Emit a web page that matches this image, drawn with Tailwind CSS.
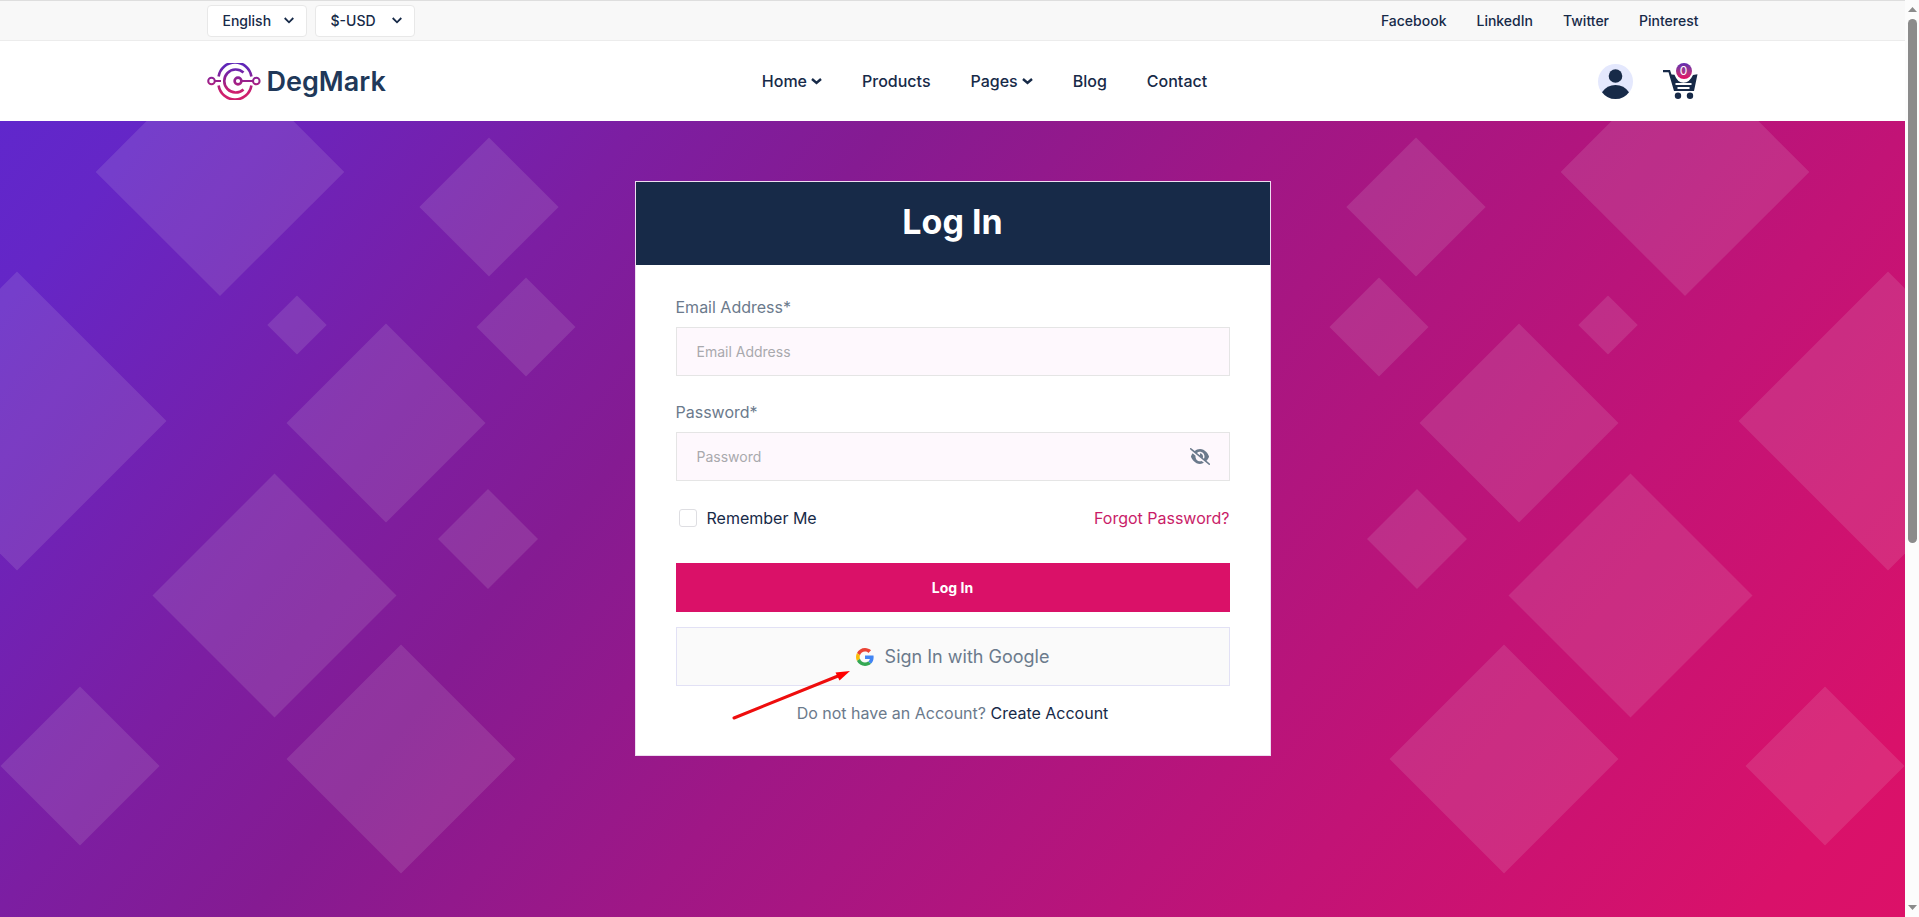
<!DOCTYPE html>
<html lang="en">
<head>
<meta charset="utf-8">
<title>DegMark - Log In</title>
<meta name="viewport" content="width=device-width, initial-scale=1">
<script src="https://cdn.jsdelivr.net/npm/@tailwindcss/browser@4"></script>
</head>
<body class="flex h-screen overflow-hidden bg-white font-['Inter',sans-serif] text-[#172a48]">
<div class="flex min-w-0 flex-1 flex-col">
  <div class="border-y border-t-[#dedede] border-b-[#ececec] bg-[#f8f8f8]">
    <div class="mx-auto flex h-[39px] max-w-[1492px] items-center justify-between text-sm font-medium">
      <div class="flex gap-2">
        <div class="relative">
          <select aria-label="Language" class="h-8 w-[100px] appearance-none rounded border border-[#e8e8e8] bg-white pl-[15px]"><option>English</option></select>
          <svg class="pointer-events-none absolute top-3 right-[13px]" width="10" height="7" viewBox="0 0 10 7" fill="none" stroke="#172a48" stroke-width="1.800"><path d="M.7 1 5 5.300 9.300 1"/></svg>
        </div>
        <div class="relative">
          <select aria-label="Currency" class="h-8 w-[100px] appearance-none rounded border border-[#e8e8e8] bg-white pl-[15px]"><option>$-USD</option></select>
          <svg class="pointer-events-none absolute top-3 right-[13px]" width="10" height="7" viewBox="0 0 10 7" fill="none" stroke="#172a48" stroke-width="1.800"><path d="M.7 1 5 5.300 9.300 1"/></svg>
        </div>
      </div>
      <div class="flex gap-[30px]">
        <a href="#">Facebook</a><a href="#">LinkedIn</a><a href="#">Twitter</a><a href="#">Pinterest</a>
      </div>
    </div>
  </div>

  <header>
    <div class="mx-auto grid h-20 max-w-[1492px] grid-cols-[1fr_auto_1fr] items-center">
      <a href="#" class="flex items-center gap-1.5">
        <svg width="54" height="37" viewBox="0 0 54 37" fill="none" stroke="url(#lg)" stroke-width="2.600">
          <defs><linearGradient id="lg" gradientUnits="userSpaceOnUse" x1="0" y1="0" x2="0" y2="37"><stop offset="0.100" stop-color="#5f27b8"/><stop offset="0.450" stop-color="#93208f"/><stop offset="0.800" stop-color="#cf1f6c"/></linearGradient></defs>
          <circle cx="4.500" cy="18" r="3.300" stroke-width="2"/><path d="M8 18.010h6" stroke-width="2"/>
          <path d="M11.600 13.500a16.600 16.600 0 0 1 32.800 0M11.600 22.500a16.600 16.600 0 0 0 32.800 0"/>
          <path d="M36.500 9.500a11.500 11.500 0 1 0 0 17"/>
          <circle cx="31" cy="18" r="3.400"/><path d="M34.500 18.010H46" stroke-width="2"/><circle cx="49.300" cy="18" r="3.300" stroke-width="2"/>
        </svg>
        <span class="pt-0.5 text-[27px] leading-9 font-semibold text-[#203859]">DegMark</span>
      </a>
      <nav class="flex gap-10 pl-16 font-medium">
        <a href="#" class="flex items-center gap-1">Home<svg width="11" height="7" viewBox="0 0 11 7" fill="none" stroke="currentColor" stroke-width="2.400"><path d="M1 1l4.500 4L10 1"/></svg></a>
        <a href="#">Products</a>
        <a href="#" class="flex items-center gap-1">Pages<svg width="11" height="7" viewBox="0 0 11 7" fill="none" stroke="currentColor" stroke-width="2.400"><path d="M1 1l4.500 4L10 1"/></svg></a>
        <a href="#">Blog</a>
        <a href="#">Contact</a>
      </nav>
      <div class="flex items-center justify-end gap-[30px] pr-px">
        <a href="#" aria-label="Account"><svg width="35" height="35" viewBox="0 0 35 35"><circle cx="17.500" cy="17.500" r="17.500" fill="#e4e8fd"/><circle cx="17.500" cy="12" r="6.800" fill="#172a48"/><path d="M4 28.200Q9 21 17.500 21T31 28.200Q26 35 17.500 35T4 28.200Z" fill="#172a48"/></svg></a>
        <a href="#" aria-label="Cart" class="relative">
          <svg width="35" height="36" viewBox="0 0 35 36" fill="#172a48"><path d="M0 7h7l1.500 4.500 3 .2q3 8 9 8T30 12l4.500-.8L31 28H11L5.500 9.200H0Z"/><circle cx="15" cy="32.800" r="3.200"/><circle cx="27" cy="32.800" r="3.200"/><path d="M12.500 21h16M14.500 25h12" stroke="#fff" stroke-width="1.800"/></svg>
          <span class="absolute top-0 left-[13px] flex size-4 items-center justify-center rounded-full bg-linear-to-b from-[#5f27b0] to-[#dc1168] to-90% text-xs text-white">0</span>
        </a>
      </div>
    </div>
  </header>

  <main class="relative flex flex-1 justify-center bg-[linear-gradient(129deg,#6027cc_0%,#6526c6_6%,#7c1ea2_25%,#851b92_35%,#9f1786_50%,#c21376_75%,#d9116a_94%,#dc1168_100%)]">
    <svg class="absolute inset-0 size-full" viewBox="0 0 1905 796" preserveAspectRatio="none" fill="#eee" fill-opacity=".12" aria-hidden="true">
      <defs><g id="diamonds">
        <path d="M220-73.500 344.300 51 220 175 95.700 51Z"/>
        <path d="M489 16.500 558.600 86 489 155.500 419.400 86Z"/>
        <path d="M526 156.500 575.500 206 526 255.500 476.500 206Z"/>
        <path d="M297 174.500 326.700 204 297 233.500 267.300 204Z"/>
        <path d="M386 202.500 485.500 302 386 401.500 286.500 302Z"/>
        <path d="M17 150.500 166.500 300 17 449.500-132.500 300Z"/>
        <path d="M274.500 352.500 396.500 474.500 274.500 596.500 152.500 474.500Z"/>
        <path d="M488 368 538 418 488 468 438 418Z"/>
        <path d="M401 523.500 515.500 638 401 752.500 286.500 638Z"/>
        <path d="M80 565.500 159.500 645 80 724.500.5 645Z"/>
      </g></defs>
      <use href="#diamonds"/><use href="#diamonds" transform="translate(1905 0) scale(-1 1)"/>
    </svg>

    <section class="relative mt-15 w-full max-w-[636px] self-start border border-[#eedcf0] bg-white">
      <h1 class="bg-[#172a48] pt-[18px] pb-[22px] text-center text-[34px] leading-[43px] font-bold text-white">Log In</h1>
      <form class="px-10 pt-[30px] pb-[30px]">
        <label for="email" class="block leading-6 text-[#6b7a8c]">Email Address*</label>
        <input id="email" type="email" placeholder="Email Address" class="mt-2 block h-[49px] w-full border border-[#e5e5e5] bg-[#fef8fd] px-5 text-sm placeholder:text-[#a9a9ad]">
        <label for="password" class="mt-6 block leading-6 text-[#6b7a8c]">Password*</label>
        <div class="relative mt-2">
          <input id="password" type="password" placeholder="Password" class="block h-[49px] w-full border border-[#e5e5e5] bg-[#fef8fd] px-5 text-sm placeholder:text-[#a9a9ad]">
          <button type="button" aria-label="Show password" class="absolute top-4 right-5"><svg width="20" height="17" viewBox="0 0 640 512" preserveAspectRatio="none" fill="#6b7a8c"><path d="M38.800 5.100C28.400-3.100 13.300-1.200 5.100 9.200S-1.200 34.700 9.200 42.900l592 464c10.400 8.200 25.500 6.300 33.700-4.100s6.300-25.500-4.100-33.700L525.600 386.700c39.600-40.600 66.400-86.100 79.900-118.400 3.300-7.900 3.300-16.700 0-24.600-14.900-35.700-46.200-87.700-93-131.100C465.500 68.800 400.800 32 320 32c-68.200 0-125 26.300-169.300 60.800L38.800 5.100zM223.100 149.500C248.600 126.200 282.700 112 320 112c79.500 0 144 64.500 144 144 0 24.900-6.300 48.300-17.400 68.700L408 294.500c8.400-19.300 10.600-41.400 4.800-63.300-11.100-41.500-47.800-69.400-88.600-71.100-5.800-.2-9.200 6.100-7.400 11.700 2.100 6.400 3.300 13.200 3.300 20.300 0 10.200-2.400 19.800-6.600 28.300l-90.300-70.800zM373 389.900c-16.400 6.500-34.300 10.100-53 10.100-79.500 0-144-64.500-144-144 0-6.900.5-13.600 1.400-20.200L83.100 161.500C60.300 191.200 44 220.800 34.500 243.700c-3.300 7.900-3.300 16.700 0 24.600 14.900 35.700 46.200 87.700 93 131.100C174.500 443.200 239.200 480 320 480c47.800 0 89.900-12.900 126.200-32.500L373 389.900z"/></svg></button>
        </div>
        <div class="mt-[25px] flex items-center justify-between leading-6">
          <label class="flex items-center gap-2.5 pl-[3px]"><input type="checkbox" class="size-[18px] appearance-none rounded-[3px] border border-[#dedee2] bg-white">Remember Me</label>
          <a href="#" class="text-[#c91c68]">Forgot Password?</a>
        </div>
        <button type="submit" class="mt-[33px] block h-[49px] w-full bg-[#da1168] text-sm font-bold text-white">Log In</button>
        <button type="button" class="mt-[15px] flex h-[59px] w-full items-center justify-center gap-[11px] border border-[#e2e1f5] bg-[#fafafa] text-lg text-[#6b7a8c]">
          <svg width="18" height="18" viewBox="0 0 48 48"><path fill="#EA4335" d="M24 9.500c3.540 0 6.710 1.220 9.210 3.600l6.850-6.850C35.900 2.380 30.470 0 24 0 14.620 0 6.510 5.380 2.560 13.220l7.980 6.190C12.430 13.720 17.740 9.500 24 9.500z"/><path fill="#4285F4" d="M46.980 24.550c0-1.570-.15-3.090-.38-4.550H24v9.020h12.940c-.58 2.960-2.260 5.480-4.780 7.180l7.730 6c4.510-4.180 7.090-10.360 7.090-17.650z"/><path fill="#FBBC05" d="M10.530 28.590c-.48-1.450-.76-2.990-.76-4.590s.27-3.140.76-4.590l-7.980-6.190C.92 16.460 0 20.120 0 24s.92 7.540 2.560 10.780l7.970-6.190z"/><path fill="#34A853" d="M24 48c6.480 0 11.930-2.130 15.890-5.810l-7.730-6c-2.150 1.450-4.920 2.300-8.160 2.300-6.260 0-11.570-4.220-13.470-9.910l-7.980 6.190C6.510 42.620 14.620 48 24 48z"/></svg>
          Sign In with Google
        </button>
        <p class="mt-[15px] text-center leading-6 text-[#6b7a8c]">Do not have an Account? <a href="#" class="text-[#172a48]">Create Account</a></p>
      </form>
      <!-- Callout arrow pointing at the Google button -->
      <svg class="pointer-events-none absolute top-[484px] left-[94px]" width="124" height="56" viewBox="0 0 124 56" aria-hidden="true"><path d="M4 52 108 10" stroke="#ee0d0d" stroke-width="3" stroke-linecap="round"/><path d="M120 5 105.500 6.500 109.500 14.500Z" fill="red"/></svg>
    </section>
  </main>
</div>

<!-- Page scrollbar -->
<div class="flex w-3.5 flex-col items-center bg-[#fcfcfc] py-[7px]" aria-hidden="true">
  <svg width="9" height="5" viewBox="0 0 9 5" fill="#8b8b8b"><path d="M0 5 4.500 0 9 5Z"/></svg>
  <div class="mt-[7px] h-[58%] w-[9px] rounded-full bg-[#8b8b8b]"></div>
  <svg class="mt-auto" width="9" height="5" viewBox="0 0 9 5" fill="#8b8b8b"><path d="M0 0 4.500 5 9 0Z"/></svg>
</div>
</body>
</html>
